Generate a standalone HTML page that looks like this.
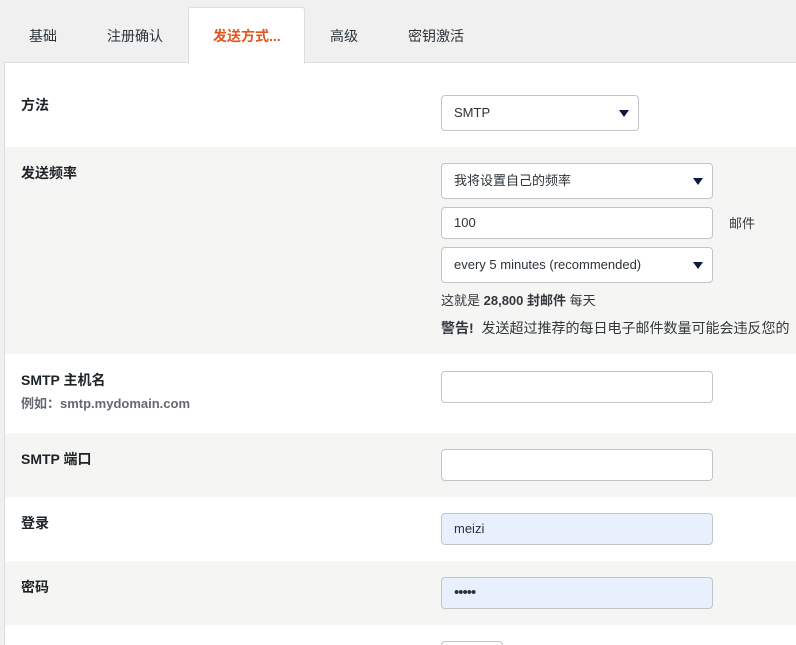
<!DOCTYPE html>
<html><head><meta charset="utf-8"><style>
*{box-sizing:border-box;margin:0;padding:0}
html,body{width:796px;height:645px;overflow:hidden}
body{background:#f0f0f0;font-family:"Liberation Sans","Noto Sans CJK SC",sans-serif;font-size:14px;color:#32373c;position:relative}
.a{position:absolute}
.tab{position:absolute;top:26px;font-size:14px;color:#2c3338}
.panel{position:absolute;left:4px;top:62px;width:800px;height:590px;background:#fff;border-left:1px solid #ddd;border-top:1px solid #ddd}
.row{position:absolute;left:5px;width:800px}
.g{background:#f5f5f4}
.lbl{position:absolute;left:21px;font-weight:bold;font-size:14px;color:#1d2327}
.in{position:absolute;left:441px;height:32px;border:1px solid #c3c4c7;border-radius:4px;background:#fff;padding:0 12px;line-height:30px;font-size:13px;color:#2c3338}
.arr{position:absolute;right:9px;top:12px;width:0;height:0;border-left:5px solid transparent;border-right:5px solid transparent;border-top:7px solid #0d1a3f}
.blue{background:#e8f0fe}
</style></head><body>
<div class="tab" style="left:29px">基础</div>
<div class="tab" style="left:107px">注册确认</div>
<div class="a" style="left:188px;top:7px;width:117px;height:57px;background:#fff;border:1px solid #ddd;border-bottom:none;border-radius:3px 3px 0 0;z-index:2"></div>
<div class="tab" style="left:213px;color:#e2571e;font-weight:bold;z-index:3">发送方式...</div>
<div class="tab" style="left:330px">高级</div>
<div class="tab" style="left:408px">密钥激活</div>
<div class="panel"></div>
<div class="row g" style="top:147px;height:207px"></div>
<div class="row g" style="top:433px;height:64px"></div>
<div class="row g" style="top:561px;height:64px"></div>

<div class="lbl" style="top:95px">方法</div>
<div class="in" style="top:95px;width:198px;height:36px;line-height:34px">SMTP<span class="arr" style="top:14px"></span></div>

<div class="lbl" style="top:163px">发送频率</div>
<div class="in" style="top:163px;width:272px;height:36px;line-height:34px">我将设置自己的频率<span class="arr" style="top:14px"></span></div>
<div class="in" style="top:207px;width:272px">100</div>
<div class="a" style="left:729px;top:213px;font-size:13px">邮件</div>
<div class="in" style="top:247px;width:272px;height:36px;line-height:34px">every 5 minutes (recommended)<span class="arr" style="top:14px"></span></div>
<div class="a" style="left:441px;top:290px;font-size:13px">这就是 <b>28,800 封邮件</b> 每天</div>
<div class="a" style="left:441px;top:318px;white-space:nowrap"><b>警告!</b>&nbsp;&nbsp;发送超过推荐的每日电子邮件数量可能会违反您的</div>

<div class="lbl" style="top:370px">SMTP 主机名</div>
<div class="a" style="left:21px;top:393px;font-weight:bold;color:#646970;font-size:13px">例如：smtp.mydomain.com</div>
<div class="in" style="top:371px;width:272px"></div>

<div class="lbl" style="top:449px">SMTP 端口</div>
<div class="in" style="top:449px;width:272px"></div>

<div class="lbl" style="top:513px">登录</div>
<div class="in blue" style="top:513px;width:272px">meizi</div>

<div class="lbl" style="top:577px">密码</div>
<div class="in blue" style="top:577px;width:272px;font-size:15px;letter-spacing:-1px">•••••</div>

<div class="in" style="top:641px;width:62px"></div>
</body></html>
